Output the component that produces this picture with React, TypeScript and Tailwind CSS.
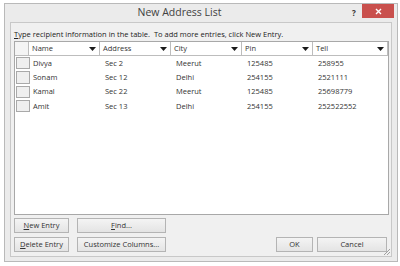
import React from "react";

type Row = { name: string; address: string; city: string; pin: string; tell: string };

const rows: Row[] = [
  { name: "Divya", address: "Sec 2", city: "Meerut", pin: "125485", tell: "258955" },
  { name: "Sonam", address: "Sec 12", city: "Delhi", pin: "254155", tell: "2521111" },
  { name: "Kamal", address: "Sec 22", city: "Meerut", pin: "125485", tell: "25698779" },
  { name: "Amit", address: "Sec 13", city: "Delhi", pin: "254155", tell: "252522552" },
];

const columns = [
  { label: "Name", w: "w-[71px]" },
  { label: "Address", w: "w-[71px]" },
  { label: "City", w: "w-[71px]" },
  { label: "Pin", w: "w-[71px]" },
  { label: "Tell", w: "w-[75px]" },
];

const Caret = () => (
  <svg width="7" height="4" viewBox="0 0 7 4" className="shrink-0">
    <path d="M0 0 L7 0 L3.5 4 Z" fill="#1a1a1a" />
  </svg>
);

const Btn = ({ children, w }: { children: React.ReactNode; w: string }) => (
  <div
    className={`${w} h-[15px] flex items-center justify-center border border-[#b4b4b4] bg-gradient-to-b from-[#f4f4f4] to-[#e4e4e4] text-[7.5px] text-[#333]`}
  >
    {children}
  </div>
);

export default function App() {
  return (
    <div
      className="w-[400px] h-[266px] bg-white pt-[3px] pl-[4px]"
      style={{ fontFamily: '"Open Sans", "Noto Sans", sans-serif' }}
    >
      <div className="w-[394px] h-[259px] border border-[#b9b9b9] bg-[#ebebeb] flex flex-col">
        {/* Title bar */}
        <div className="h-[18px] flex items-center relative">
          <div className="flex-1 text-center text-[10.5px] text-[#404040] pl-[8px]">New Address List</div>
          <div className="w-[16px] text-[8px] text-[#333] font-bold text-center">?</div>
          <div className="w-[32px] h-[14px] mr-[3px] self-start bg-[#c9504d] flex items-center justify-center">
            <svg width="7" height="7" viewBox="0 0 7 7">
              <path d="M1 1 L6 6 M6 1 L1 6" stroke="white" strokeWidth="1.4" />
            </svg>
          </div>
        </div>

        {/* Client area */}
        <div className="relative mx-[5px] h-[235px] border border-[#c8c8c8] bg-[#f0f0f0] px-[3px] pt-[6px] flex flex-col">
          <div className="text-[7.5px] text-[#222] leading-[10px] h-[12px]">
            <span className="underline">T</span>ype recipient information in the table.&nbsp; To add more entries, click New Entry.
          </div>

          {/* Table */}
          <div className="w-[375px] h-[174px] border border-[#a8a8a8] bg-white flex flex-col text-[7.5px] text-[#333]">
            <div className="flex h-[14px]">
              <div className="w-[14px] border-r border-b border-[#bdbdbd] bg-[#f4f4f4]" />
              {columns.map((c) => (
                <div
                  key={c.label}
                  className={`${c.w} flex items-center justify-between pl-[3px] pr-[3px] border-r border-b border-[#bdbdbd] bg-white`}
                >
                  <span>{c.label}</span>
                  <Caret />
                </div>
              ))}
            </div>
            {rows.map((r) => (
              <div key={r.name} className="flex h-[14.33px]">
                <div className="w-[14px] border border-[#a9a9a9] bg-[#efefef] m-px" />
                <div className="w-[70px] pl-[2px] flex items-center">{r.name}</div>
                <div className="w-[71px] pl-[4px] flex items-center">{r.address}</div>
                <div className="w-[71px] pl-[4px] flex items-center">{r.city}</div>
                <div className="w-[71px] pl-[4px] flex items-center">{r.pin}</div>
                <div className="w-[71px] pl-[4px] flex items-center">{r.tell}</div>
              </div>
            ))}
          </div>

          {/* Buttons */}
          <div className="flex mt-[3px] gap-[4px]">
            <div className="flex flex-col gap-[4px]">
              <div className="flex gap-[8px]">
                <Btn w="w-[55px]">
                  <span>
                    <span className="underline">N</span>ew Entry
                  </span>
                </Btn>
                <Btn w="w-[89px]">
                  <span>
                    <span className="underline">F</span>ind...
                  </span>
                </Btn>
              </div>
              <div className="flex gap-[8px]">
                <Btn w="w-[55px]">
                  <span>
                    <span className="underline">D</span>elete Entry
                  </span>
                </Btn>
                <Btn w="w-[89px]">Customize Columns...</Btn>
              </div>
            </div>
            <div className="flex-1 flex items-end justify-end gap-[4px] pr-[1px]">
              <Btn w="w-[37px]">OK</Btn>
              <Btn w="w-[70px]">Cancel</Btn>
            </div>
          </div>

          {/* resize grip */}
          <svg width="9" height="9" viewBox="0 0 9 9" className="absolute right-0 bottom-0">
            <path d="M8 2 L2 8 M8 5 L5 8" stroke="#a0a0a0" strokeWidth="1" />
          </svg>
        </div>
      </div>
    </div>
  );
}
